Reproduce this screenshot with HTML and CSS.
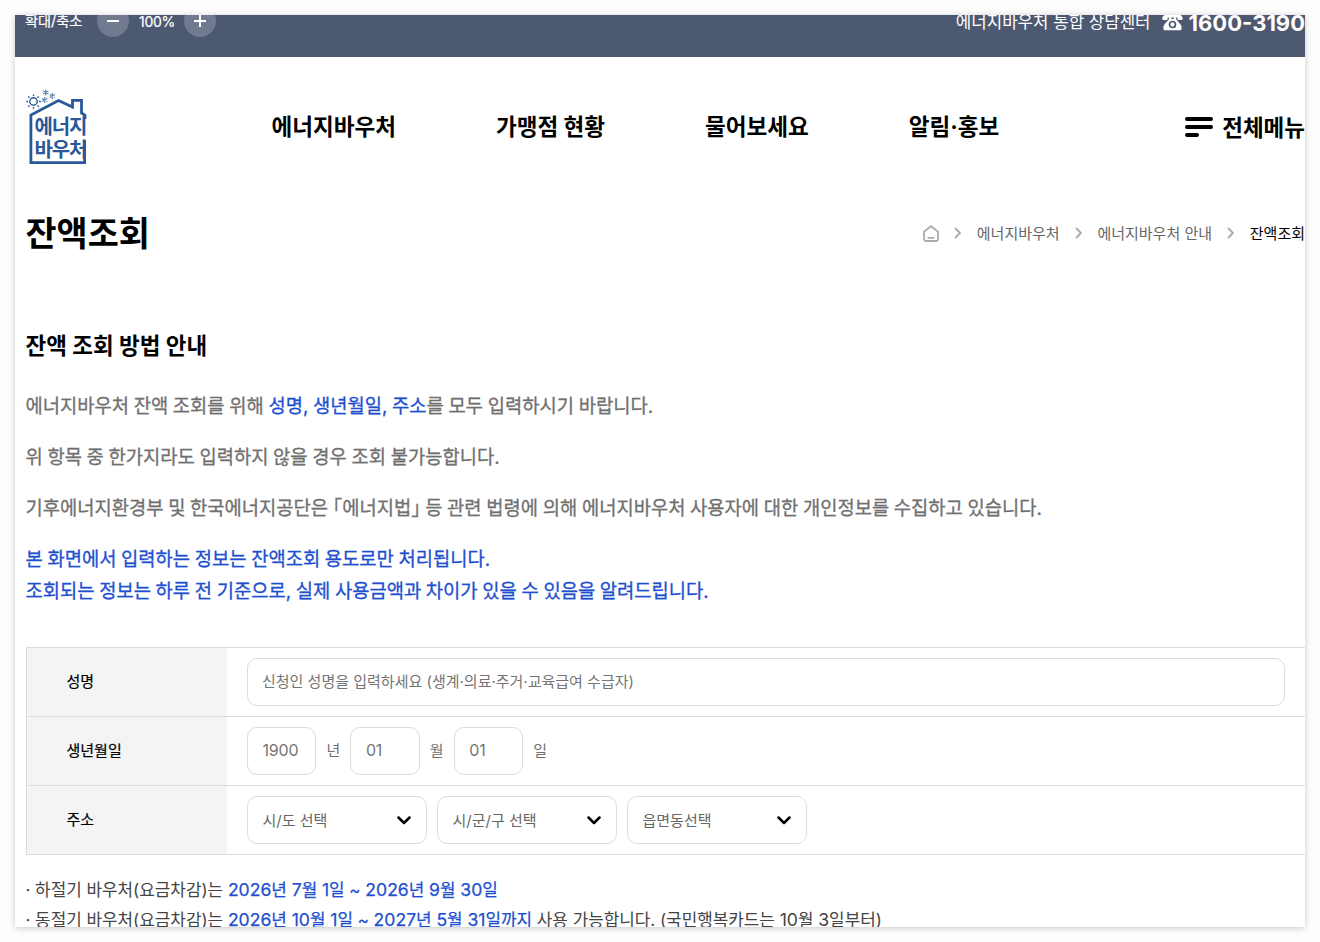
FILE: index.html
```html
<!DOCTYPE html>
<html lang="ko">
  <head>
    <meta charset="UTF-8" />
    <title>잔액조회 - 에너지바우처</title>
    <link rel="stylesheet" href="styles.css">
  </head>
  <body>
    <div class="page">
      <div class="topbar">
        <div class="zoom">
          <span>확대/축소</span>
          <button type="button" class="zoom-btn" aria-label="축소">
            <svg width="12" height="12" viewBox="0 0 12 12"><path d="M0 6h12" /></svg>
          </button>
          <span class="zoom-value">100%</span>
          <button type="button" class="zoom-btn" aria-label="확대">
            <svg width="12" height="12" viewBox="0 0 12 12"><path d="M0 6h12M6 0v12" /></svg>
          </button>
        </div>
        <div class="call">
          <span class="call-label">에너지바우처 통합 상담센터</span>
          <svg class="call-icon" width="21" height="18" viewBox="0 0 21 18">
            <path fill="#fff" d="M.3 5.500C.3 2 4.500.6 10.500.6s10.200 1.400 10.200 4.900c0 1.100-.5 1.500-1.400 1.500h-2.600c-.9 0-1.300-.5-1.300-1.300V4.600h-1.300v1.600l3.900 4.500c1.200 1.400 1.500 2.300 1.500 3.800v1.200c0 1.100-.5 1.600-1.600 1.600H3.100c-1.100 0-1.600-.5-1.600-1.600v-1.200c0-1.500.3-2.400 1.500-3.800l3.900-4.500V4.600H5.600v1.100C5.600 6.500 5.200 7 4.300 7H1.700C.8 7 .3 6.600.3 5.500zM9.300 4.600v1.300h2.400V4.600z" />
            <circle cx="10.500" cy="11.500" r="3" fill="none" stroke="#4d5871" stroke-width="1.700" />
          </svg>
          <strong class="call-number">1600-3190</strong>
        </div>
      </div>

      <header class="header">
        <a class="logo" href="#" aria-label="에너지바우처">
          <svg width="62" height="76" viewBox="0 0 62 76">
            <path class="logo-line" d="M59 30V26.200L55.500 24V11.300h-9V18L32.500 11.500 4.900 26v47.700h53.700V51" />
            <g class="logo-sun">
              <circle cx="7.500" cy="12.500" r="3.700" />
              <path d="M7.500 5.500V7M7.500 18v1.800M.3 12.500H2M13 12.500h1.800M2.300 7.500l1.200 1.200M11.500 16.500l1.200 1.200M2.300 17.700l1.200-1.200M11.500 8.700l1.200-1.200" />
            </g>
            <g class="logo-snow">
              <path d="M19.700.5v6M17 2l5.400 3M17 5l5.400-3M26.300 4v6M23.600 5.500l5.400 3M23.600 8.500l5.400-3M18.700 8v6M16 9.500l5.400 3M16 12.500l5.400-3" />
            </g>
            <text class="logo-text" x="8.500" y="44.500" textLength="53">에너지</text>
            <text class="logo-text" x="8.500" y="67.500" textLength="53">바우처</text>
          </svg>
        </a>
        <nav class="gnb">
          <a href="#">에너지바우처</a>
          <a href="#">가맹점 현황</a>
          <a href="#">물어보세요</a>
          <a href="#">알림·홍보</a>
        </nav>
        <a class="all-menu" href="#">
          <svg width="28" height="20" viewBox="0 0 28 20"><path d="M2 2h24M2 10h24M2 18h10" /></svg>
          <span>전체메뉴</span>
        </a>
      </header>

      <main class="content">
        <div class="title-row">
          <h1>잔액조회</h1>
          <div class="breadcrumb">
            <svg class="home" width="16" height="17" viewBox="0 0 16 17"><path d="M1 6.600 8 1.200l7 5.400V14a2 2 0 0 1-2 2H3a2 2 0 0 1-2-2zM4.500 12.800h7" /></svg>
            <svg class="sep" width="7" height="12" viewBox="0 0 7 12"><path d="M1 1l5 5-5 5" /></svg>
            <a href="#">에너지바우처</a>
            <svg class="sep" width="7" height="12" viewBox="0 0 7 12"><path d="M1 1l5 5-5 5" /></svg>
            <a href="#">에너지바우처 안내</a>
            <svg class="sep" width="7" height="12" viewBox="0 0 7 12"><path d="M1 1l5 5-5 5" /></svg>
            <span class="current">잔액조회</span>
          </div>
        </div>

        <h2>잔액 조회 방법 안내</h2>
        <div class="guide">
          <p>에너지바우처 잔액 조회를 위해 <span class="blue">성명, 생년월일, 주소</span>를 모두 입력하시기 바랍니다.</p>
          <p>위 항목 중 한가지라도 입력하지 않을 경우 조회 불가능합니다.</p>
          <p>기후에너지환경부 및 한국에너지공단은 ｢에너지법｣ 등 관련 법령에 의해 에너지바우처 사용자에 대한 개인정보를 수집하고 있습니다.</p>
          <p class="blue">본 화면에서 입력하는 정보는 잔액조회 용도로만 처리됩니다.<br>조회되는 정보는 하루 전 기준으로, 실제 사용금액과 차이가 있을 수 있음을 알려드립니다.</p>
        </div>

        <form class="form-table">
          <div class="row">
            <div class="label">성명</div>
            <div class="field">
              <input type="text" class="name" placeholder="신청인 성명을 입력하세요 (생계·의료·주거·교육급여 수급자)">
            </div>
          </div>
          <div class="row">
            <div class="label">생년월일</div>
            <div class="field">
              <input type="text" class="date" placeholder="1900"><span class="unit">년</span>
              <input type="text" class="date" placeholder="01"><span class="unit">월</span>
              <input type="text" class="date" placeholder="01"><span class="unit">일</span>
            </div>
          </div>
          <div class="row">
            <div class="label">주소</div>
            <div class="field">
              <div class="select">
                <select><option>시/도 선택</option></select>
                <svg width="14" height="9" viewBox="0 0 14 9"><path d="M1.500 1.500 7 7l5.500-5.500" /></svg>
              </div>
              <div class="select">
                <select><option>시/군/구 선택</option></select>
                <svg width="14" height="9" viewBox="0 0 14 9"><path d="M1.500 1.500 7 7l5.500-5.500" /></svg>
              </div>
              <div class="select">
                <select><option>읍면동선택</option></select>
                <svg width="14" height="9" viewBox="0 0 14 9"><path d="M1.500 1.500 7 7l5.500-5.500" /></svg>
              </div>
            </div>
          </div>
        </form>

        <ul class="notes">
          <li>· 하절기 바우처(요금차감)는 <span class="blue"><b>2026</b>년 <b>7</b>월 <b>1</b>일 ~ <b>2026</b>년 <b>9</b>월 <b>30</b>일</span></li>
          <li>· 동절기 바우처(요금차감)는 <span class="blue"><b>2026</b>년 <b>10</b>월 <b>1</b>일 ~ <b>2027</b>년 <b>5</b>월 <b>31</b>일까지</span> 사용 가능합니다. (국민행복카드는 <b>10</b>월 <b>3</b>일부터)</li>
        </ul>
      </main>
    </div>
  </body>
</html>
```

FILE: styles.css
```css
* {
  box-sizing: border-box;
}
body {
  margin: 0;
  padding: 15px;
  background: #fdfdfd;
  font-family: Inter, "Noto Sans CJK KR", sans-serif;
  font-size: 15px;
  color: #000;
}
h1, h2, p, ul {
  margin: 0;
  padding: 0;
}
a {
  color: inherit;
  text-decoration: none;
}
.page {
  width: 1290px;
  height: 912px;
  overflow: hidden;
  background: #fff;
  box-shadow: 0 1px 6px rgba(0, 0, 0, 0.22);
  white-space: nowrap;
}
.blue {
  color: #1d4fd0;
}

/* top bar */
.topbar {
  display: flex;
  justify-content: space-between;
  align-items: center;
  height: 72px;
  margin-top: -30px;
  padding-left: 10px;
  background: #4d5871;
  color: #fff;
}
.zoom {
  display: flex;
  align-items: center;
  gap: 10px;
  font-size: 14px;
  -webkit-text-stroke: 0.2px;
}
.zoom > span:first-child {
  width: 62px;
  padding-bottom: 2px;
  font-size: 14.2px;
}
.zoom-btn {
  display: flex;
  align-items: center;
  justify-content: center;
  width: 32px;
  height: 32px;
  padding: 0;
  border: 0;
  border-radius: 50%;
  background: #717a8e;
}
.zoom-btn svg {
  stroke: #fff;
  stroke-width: 2;
}
.zoom-value {
  width: 35px;
  letter-spacing: -0.02em;
}
.call {
  display: flex;
  align-items: center;
}
.call-label {
  font-size: 16.8px;
}
.call-icon {
  margin: 2px 6px 0 11px;
}
.call-number {
  padding-top: 3px;
  font-size: 22px;
}

/* header */
.header {
  display: flex;
  align-items: center;
  height: 140px;
  padding-left: 11px;
}
.logo {
  display: flex;
  width: 62px;
}
.logo-line {
  fill: none;
  stroke: #29599a;
  stroke-width: 2.8;
}
.logo-sun {
  fill: none;
  stroke: #29599a;
  stroke-width: 1.4;
}
.logo-snow {
  stroke: #5f84b5;
  stroke-width: 1.2;
}
.logo-text {
  fill: #29599a;
  font-size: 20px;
  font-weight: 700;
}
.gnb {
  display: flex;
  gap: 100px;
  margin-left: 183.5px;
  padding-bottom: 4px;
  font-size: 22.55px;
  font-weight: 700;
}
.all-menu {
  display: flex;
  align-items: center;
  gap: 9px;
  margin-left: auto;
  font-size: 22.5px;
  font-weight: 700;
}
.all-menu span {
  padding-bottom: 2px;
}
.all-menu svg {
  stroke: #000;
  stroke-width: 4;
  stroke-linecap: round;
}

/* content */
.content {
  padding-left: 10.5px;
}
.title-row {
  display: flex;
  justify-content: space-between;
  align-items: center;
  height: 72px;
}
h1 {
  padding-bottom: 4px;
  font-size: 33.8px;
}
.breadcrumb {
  display: flex;
  align-items: center;
  color: #666;
}
.breadcrumb a, .breadcrumb span {
  padding-bottom: 2px;
}
.breadcrumb svg {
  fill: none;
  stroke: #aaa;
  stroke-width: 1.8;
}
.breadcrumb .sep {
  margin: 0 15.4px;
}
.breadcrumb .current {
  color: #000;
}
h2 {
  margin-top: 59px;
  font-size: 22.5px;
  line-height: 36px;
}
.guide {
  margin-top: 27px;
  font-size: 18.75px;
  line-height: 32px;
  word-spacing: -0.6px;
  color: #707070;
  -webkit-text-stroke: 0.3px;
}
.guide p + p {
  margin-top: 19px;
}

/* form */
.form-table {
  margin: 39px 0 0 0.5px;
  border-top: 1px solid #dbdbdb;
  border-left: 1px solid #dbdbdb;
}
.row {
  display: flex;
  height: 69px;
  border-bottom: 1px solid #dbdbdb;
}
.label {
  width: 200px;
  padding-left: 39.5px;
  background: #f4f4f4;
  line-height: 67px;
  -webkit-text-stroke: 0.2px;
}
.field {
  display: flex;
  flex: 1;
  align-items: center;
  gap: 10px;
  padding: 0 20px;
  color: #707070;
}
input, select {
  height: 48px;
  padding: 0 14px;
  border: 1px solid #dbdbdb;
  border-radius: 10px;
  background: #fff;
  font-family: inherit;
  font-size: 15px;
}
input {
  padding-bottom: 2px;
}
input::placeholder {
  color: #757575;
}
.name {
  width: 100%;
}
.date {
  width: 69.4px;
  padding-left: 14.5px;
  font-size: 16px;
  letter-spacing: -0.01em;
}
.unit {
  width: 14px;
  padding-bottom: 3px;
}
.select {
  position: relative;
}
.select select {
  display: block;
  width: 180px;
  padding-left: 14.5px;
  appearance: none;
  color: #666;
}
.select svg {
  position: absolute;
  top: 20px;
  right: 16px;
  fill: none;
  stroke: #000;
  stroke-width: 2.5;
  stroke-linecap: round;
  stroke-linejoin: round;
}

/* notes */
.notes {
  margin-top: 20px;
  list-style: none;
  font-size: 16.9px;
  line-height: 30px;
  color: #444;
}
.notes b {
  font-size: 17.6px;
  font-weight: inherit;
}
.notes .blue {
  -webkit-text-stroke: 0.25px;
}
```
